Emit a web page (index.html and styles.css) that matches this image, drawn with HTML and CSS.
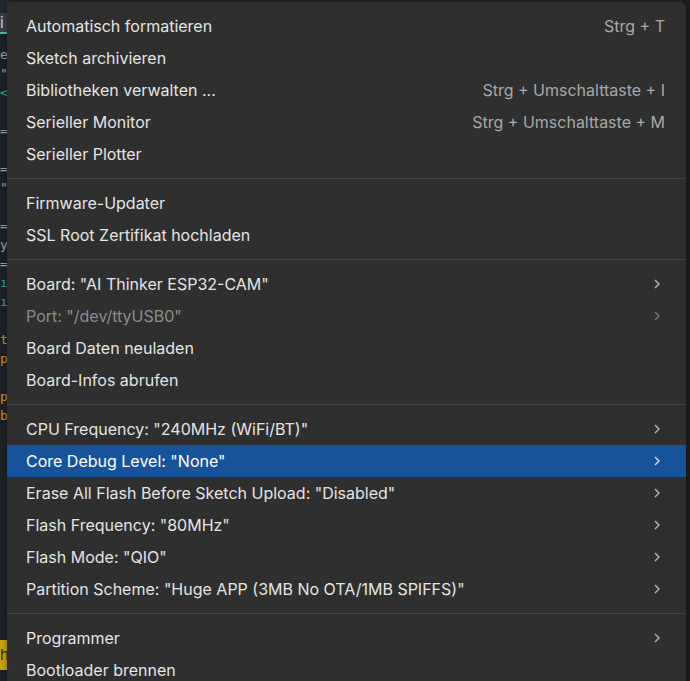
FILE: index.html
```html
<!DOCTYPE html>
<html lang="de">
<head>
<meta charset="utf-8">
<link rel="stylesheet" href="styles.css">
</head>
<body>
<div class="editor">
  <div class="tabbar"><span class="tab">i</span></div>
  <div class="code">
    <div class="ln c-w">er</div>
    <div class="ln c-w">"</div>
    <div class="ln c-t">&lt;</div>
    <div class="ln"></div>
    <div class="ln c-w">=</div>
    <div class="ln"></div>
    <div class="ln c-w">=</div>
    <div class="ln c-w">"</div>
    <div class="ln"></div>
    <div class="ln c-w">=</div>
    <div class="ln c-w">y</div>
    <div class="ln c-w">=</div>
    <div class="ln c-t">ı</div>
    <div class="ln c-t">ı</div>
    <div class="ln"></div>
    <div class="ln c-o">t</div>
    <div class="ln c-o">p</div>
    <div class="ln"></div>
    <div class="ln c-o">p</div>
    <div class="ln c-o">b</div>
  </div>
  <div class="status"><span class="badge">h</span></div>
</div>
<div class="rightbar"></div>

<div class="menu">
  <div class="item"><span class="label">Automatisch formatieren</span><span class="key">Strg + T</span></div>
  <div class="item"><span class="label">Sketch archivieren</span></div>
  <div class="item"><span class="label">Bibliotheken verwalten ...</span><span class="key">Strg + Umschalttaste + I</span></div>
  <div class="item"><span class="label">Serieller Monitor</span><span class="key">Strg + Umschalttaste + M</span></div>
  <div class="item"><span class="label">Serieller Plotter</span></div>
  <div class="sep"></div>
  <div class="item"><span class="label">Firmware-Updater</span></div>
  <div class="item"><span class="label">SSL Root Zertifikat hochladen</span></div>
  <div class="sep"></div>
  <div class="item"><span class="label">Board: "AI Thinker ESP32-CAM"</span><svg class="chev" viewBox="0 0 6 10"><path d="M1 1 L5 5 L1 9"/></svg></div>
  <div class="item disabled"><span class="label">Port: "/dev/ttyUSB0"</span><svg class="chev" viewBox="0 0 6 10"><path d="M1 1 L5 5 L1 9"/></svg></div>
  <div class="item"><span class="label">Board Daten neuladen</span></div>
  <div class="item"><span class="label">Board-Infos abrufen</span></div>
  <div class="sep"></div>
  <div class="item"><span class="label">CPU Frequency: "240MHz (WiFi/BT)"</span><svg class="chev" viewBox="0 0 6 10"><path d="M1 1 L5 5 L1 9"/></svg></div>
  <div class="item active"><span class="label">Core Debug Level: "None"</span><svg class="chev" viewBox="0 0 6 10"><path d="M1 1 L5 5 L1 9"/></svg></div>
  <div class="item"><span class="label">Erase All Flash Before Sketch Upload: "Disabled"</span><svg class="chev" viewBox="0 0 6 10"><path d="M1 1 L5 5 L1 9"/></svg></div>
  <div class="item"><span class="label">Flash Frequency: "80MHz"</span><svg class="chev" viewBox="0 0 6 10"><path d="M1 1 L5 5 L1 9"/></svg></div>
  <div class="item"><span class="label">Flash Mode: "QIO"</span><svg class="chev" viewBox="0 0 6 10"><path d="M1 1 L5 5 L1 9"/></svg></div>
  <div class="item"><span class="label">Partition Scheme: "Huge APP (3MB No OTA/1MB SPIFFS)"</span><svg class="chev" viewBox="0 0 6 10"><path d="M1 1 L5 5 L1 9"/></svg></div>
  <div class="sep"></div>
  <div class="item"><span class="label">Programmer</span><svg class="chev" viewBox="0 0 6 10"><path d="M1 1 L5 5 L1 9"/></svg></div>
  <div class="item"><span class="label">Bootloader brennen</span></div>
</div>
</body>
</html>
```

FILE: styles.css
```css
* { box-sizing: border-box; }
html, body { margin: 0; padding: 0; }
body {
  width: 690px;
  height: 681px;
  overflow: hidden;
  background: #1c2126;
  font-family: Inter, "Noto Sans", sans-serif;
  display: flex;
}
.editor {
  width: 683px;
  height: 681px;
  display: flex;
  flex-direction: column;
  background: #1c2126;
}
.tabbar {
  height: 35px;
  background: #23292e;
  border-bottom: 2px solid #1f2428;
  padding-top: 13px;
}
.tab {
  display: inline-block;
  width: 7px;
  height: 21px;
  background: #39424a;
  border-bottom: 2px solid #4fb7b3;
  color: #c8d0d6;
  font-size: 15px;
  line-height: 19px;
  overflow: hidden;
}
.code {
  flex: 1;
  font-family: "DejaVu Sans Mono", monospace;
  font-size: 13px;
  padding-top: 10px;
}
.ln { height: 19px; line-height: 19px; }
.c-w { color: #9aa3aa; }
.c-t { color: #27a9a5; }
.c-o { color: #d3901c; }
.status {
  height: 40px;
  padding-top: 5px;
  margin-bottom: 6px;
}
.badge {
  display: inline-block;
  width: 7px;
  height: 30px;
  background: #c9a40d;
  color: #3a2f00;
  font-size: 15px;
  line-height: 30px;
  overflow: hidden;
}
.rightbar {
  width: 7px;
  height: 681px;
  background: #1a1f23;
  border-left: 2px solid #15191c;
}
.menu {
  position: absolute;
  left: 7px;
  top: 2px;
  width: 679px;
  height: 700px;
  background: #2f2f2f;
  border-radius: 0 6px 0 0;
  padding-top: 8px;
  color: #e4e4e4;
  font-size: 16px;
  box-shadow: 0 0 6px rgba(0,0,0,0.4);
}
.item {
  height: 32px;
  display: flex;
  align-items: center;
  padding: 0 21px 0 19px;
}
.label { flex: 1; white-space: nowrap; }
.key { color: #a8a8a8; white-space: nowrap; }
.disabled { color: #8c8c8c; }
.active { background: #17539b; color: #ffffff; }
.chev {
  width: 6px;
  height: 10px;
  margin-right: 5px;
  fill: none;
  stroke: #b8b8b8;
  stroke-width: 1.4;
}
.disabled .chev { stroke: #7a7a7a; }
.active .chev { stroke: #d8e2ef; }
.sep {
  height: 17px;
  padding-top: 8px;
}
.sep::before {
  content: "";
  display: block;
  height: 1px;
  background: #454545;
}
```
